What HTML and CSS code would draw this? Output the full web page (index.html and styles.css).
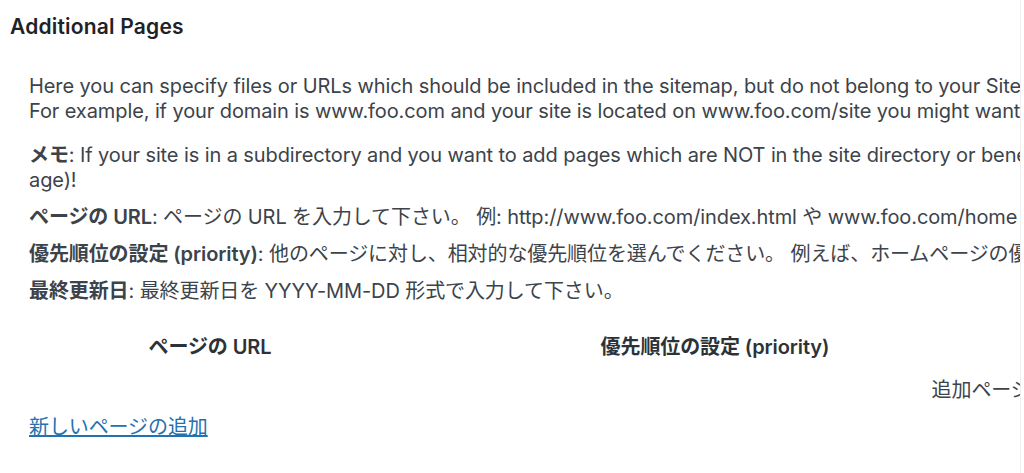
FILE: index.html
```html
<!DOCTYPE html>
<html lang="ja">

<head>
    <meta charset="UTF-8">
    <meta name="viewport" content="width=device-width, initial-scale=1.0">
    <title>Additional Pages</title>
    <link rel="stylesheet" href="styles.css">
</head>

<body>

    <div class="postbox">
        <h2 class="hndle">Additional Pages</h2>

        <div class="inside">
            <div class="desc">
                <p class="intro">
                    <span class="line">Here you can specify files or URLs which should be included in the sitemap, but do not belong to your Site/Blog.</span>
                    <span class="line">For example, if your domain is www.foo.com and your site is located on www.foo.com/site you might want to include your homepage at www.foo.com</span>
                </p>
                <p>
                    <span class="line"><b>メモ</b>: If your site is in a subdirectory and you want to add pages which are NOT in the site directory or beneath, you MUST place your sitemap file in the root directory (Look at the "Location of your sitemap file" section on this p</span>
                    <span class="line">age)!</span>
                </p>
                <p><span class="line"><b>ページの URL</b>: ページの URL を入力して下さい。 例: http://www.foo.com/index.html や www.foo.com/home</span></p>
                <p><span class="line"><b>優先順位の設定 (priority)</b>: 他のページに対し、相対的な優先順位を選んでください。 例えば、ホームページの優先順位は他のページより高くてもよいでしょう。</span></p>
                <p><span class="line"><b>最終更新日</b>: 最終更新日を YYYY-MM-DD 形式で入力して下さい。</span></p>
            </div>

            <table class="pages">
                <colgroup>
                    <col class="col-url">
                    <col class="col-priority">
                    <col class="col-changed">
                </colgroup>
                <thead>
                    <tr>
                        <th>ページの URL</th>
                        <th>優先順位の設定 (priority)</th>
                        <th>最終更新日</th>
                    </tr>
                </thead>
                <tbody>
                    <tr>
                        <td colspan="3" class="empty">追加ページは定義されていません。</td>
                    </tr>
                </tbody>
            </table>

            <a href="#" class="add-page">新しいページの追加</a>
        </div>
    </div>

</body>

</html>
```

FILE: styles.css
```css
:root {
    --text-color: #3c434a;
    --heading-color: #1d2327;
    --link-color: #2271b1;
}

body {
    margin: 0;
    background-color: #fff;
    color: var(--text-color);
    font-family: Inter, 'Noto Sans CJK JP', sans-serif;
}

.postbox {
    width: 1021px;
    height: 473px;
    overflow: hidden;
    border-right: 1px solid #efefef;
    box-sizing: border-box;
}

.hndle {
    margin: 0;
    padding: 14px 10px 0;
    font-size: 21px;
    line-height: 26px;
    font-weight: 600;
    letter-spacing: 0.2px;
    color: var(--heading-color);
    white-space: nowrap;
}

.inside {
    padding: 34px 0 0 29px;
    font-size: 20px;
    line-height: 25px;
    letter-spacing: -0.1px;
}

.desc p {
    margin: 0 0 12px;
    white-space: nowrap;
}

.desc p.intro {
    margin-bottom: 19px;
}

.desc .line {
    display: block;
}

.desc b {
    font-weight: 600;
}

.pages {
    margin-top: 23px;
    width: 2122px;
    table-layout: fixed;
    border-collapse: collapse;
}

.col-url {
    width: 362px;
}

.col-priority {
    width: 648px;
}

.pages th,
.pages td {
    padding: 8px 10px;
    text-align: center;
    line-height: 25px;
}

.pages td {
    padding-top: 10px;
}

.pages th {
    font-weight: 600;
    color: #2c3338;
}

.add-page {
    display: inline-block;
    margin-top: 4px;
    color: var(--link-color);
    text-decoration: underline;
}
```
